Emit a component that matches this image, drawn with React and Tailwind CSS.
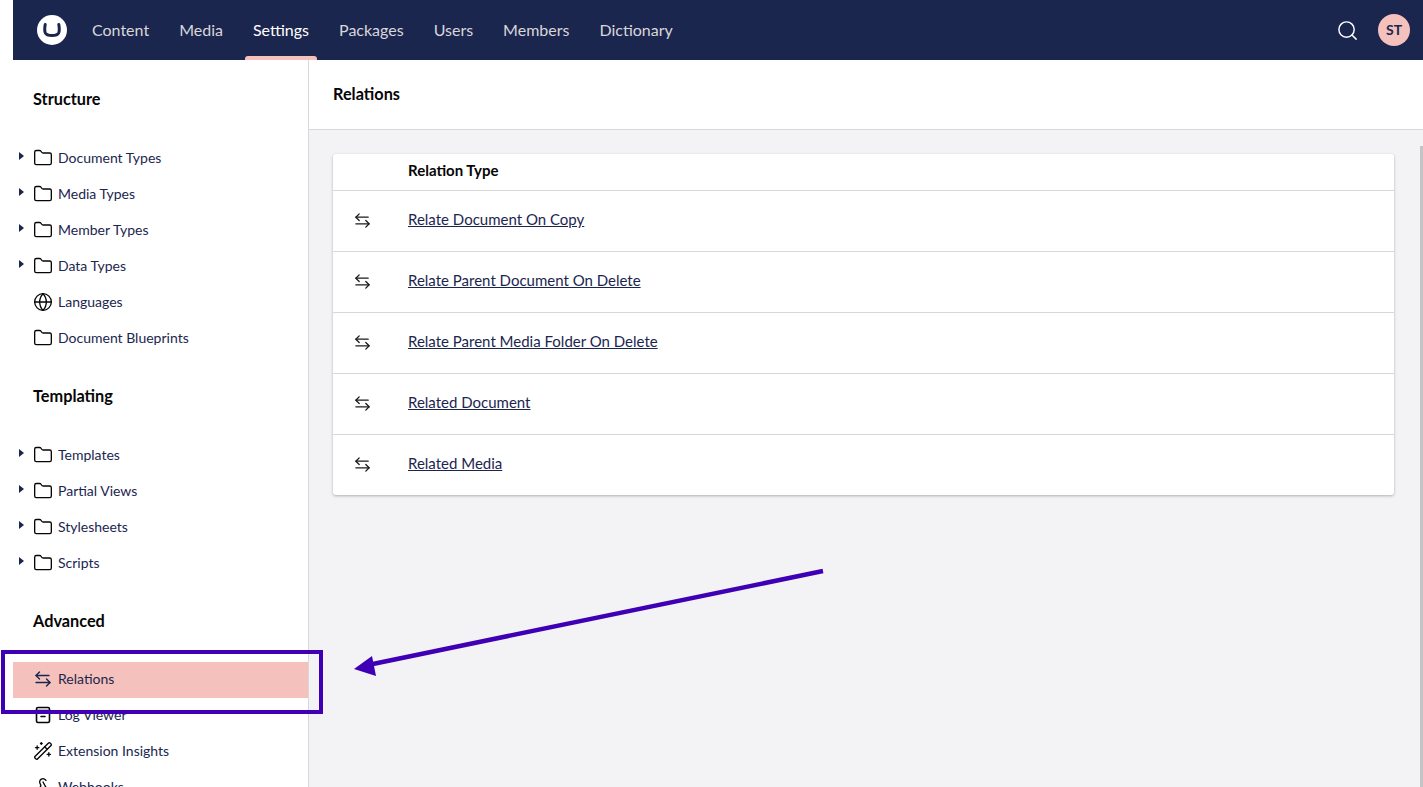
import { Folder, Globe, Search, WandSparkles, Webhook } from "lucide-react";

const navItems = ["Content", "Media", "Settings", "Packages", "Users", "Members", "Dictionary"];

const relationTypes = [
  "Relate Document On Copy",
  "Relate Parent Document On Delete",
  "Relate Parent Media Folder On Delete",
  "Related Document",
  "Related Media",
];

const sections = [
  {
    title: "Structure",
    items: [
      { label: "Document Types", caret: true },
      { label: "Media Types", caret: true },
      { label: "Member Types", caret: true },
      { label: "Data Types", caret: true },
      { label: "Languages", icon: "globe" },
      { label: "Document Blueprints" },
    ],
  },
  {
    title: "Templating",
    items: [
      { label: "Templates", caret: true },
      { label: "Partial Views", caret: true },
      { label: "Stylesheets", caret: true },
      { label: "Scripts", caret: true },
    ],
  },
  {
    title: "Advanced",
    raised: true,
    items: [
      { label: "Relations", icon: "relations", active: true },
      { label: "Log Viewer", icon: "log" },
      { label: "Extension Insights", icon: "wand" },
      { label: "Webhooks", icon: "webhook" },
    ],
  },
];

function RelationIcon({ className }) {
  return (
    <svg viewBox="0 0 18 18" fill="none" stroke="currentColor" strokeWidth="1.4" strokeLinecap="round" strokeLinejoin="round" className={className}>
      <path d="M2 5.5h13" />
      <path d="M5.5 2 2 5.5 5.5 9" />
      <path d="M2 12.5h14" />
      <path d="M12.5 9l3.5 3.5-3.500 3.5" />
    </svg>
  );
}

function LogIcon({ className }) {
  return (
    <svg viewBox="0 0 18 18" fill="none" stroke="currentColor" strokeWidth="1.6" strokeLinecap="round" strokeLinejoin="round" className={className}>
      <rect x="2.500" y="1.500" width="13" height="15" rx="1.500" />
      <path d="M2.500 4.500h13" />
      <path d="M7 10.500h4" />
    </svg>
  );
}

function RowIcon({ icon }) {
  const cls = "w-5 h-5 shrink-0 text-[#060606]";
  if (icon === "globe") return <Globe className={cls} strokeWidth={1.6} />;
  if (icon === "relations") return <RelationIcon className="w-[18px] h-[18px] mx-px shrink-0 text-[#1b264f]" />;
  if (icon === "log") return <LogIcon className="w-[18px] h-[18px] mx-px shrink-0 text-[#060606]" />;
  if (icon === "wand") return <WandSparkles className={cls} strokeWidth={1.6} />;
  if (icon === "webhook") return <Webhook className={cls} strokeWidth={1.6} />;
  return <Folder className={cls} strokeWidth={1.6} />;
}

function SidebarRow({ item, raised }) {
  return (
    <div className={`relative flex items-center h-9 pl-5 gap-[5px] text-sm text-[#1b264f] ${item.active ? "bg-[#f5c1bc]" : ""} ${raised ? "pb-[2px]" : ""}`}>
      {item.caret && (
        <span className="absolute left-[6px] top-[12px] w-0 h-0 border-y-[4px] border-y-transparent border-l-[5px] border-l-[#1b264f]" />
      )}
      <RowIcon icon={item.icon} />
      <span>{item.label}</span>
    </div>
  );
}

export default function App() {
  return (
    <div className="relative h-[787px] overflow-hidden bg-white pl-[13px] font-['Lato','Open_Sans',sans-serif]">
      <header className="h-[60px] bg-[#1b264f] flex items-center pl-6 pr-[13px]">
        <div className="w-[30px] h-[30px] rounded-full bg-white flex items-center justify-center mr-[10px]">
          <svg viewBox="0 0 30 30" className="w-[30px] h-[30px]" fill="none" stroke="#1b264f" strokeWidth="3" strokeLinecap="round">
            <path d="M8.200 9.500c-.6 3.400-.6 6.600.1 8.300.9 2 3.400 2.700 6.700 2.700s5.800-.7 6.700-2.700c.7-1.700.7-4.900.1-8.300" />
          </svg>
        </div>
        <nav className="flex h-full">
          {navItems.map((item) => (
            <div
              key={item}
              className={`relative flex items-center px-[15px] text-base ${item === "Settings" ? "text-white" : "text-[#d8d7d9]"}`}
            >
              {item}
              {item === "Settings" && (
                <span className="absolute left-[7px] right-[7px] bottom-0 h-1 rounded-t-[3px] bg-[#f5c1bc]" />
              )}
            </div>
          ))}
        </nav>
        <Search className="ml-auto w-[23px] h-[23px] text-white" strokeWidth={1.5} />
        <div className="ml-[19px] w-8 h-8 rounded-full bg-[#f5c1bc] flex items-center justify-center text-sm font-bold text-[#1b264f]">
          ST
        </div>
      </header>

      <div className="flex h-[727px]">
        <aside className="w-[296px] shrink-0 border-r border-[#d8d7d9] pt-6">
          {sections.map((section) => (
            <section key={section.title} className="mb-[25px]">
              <h3 className="h-[30px] pl-5 mb-[26px] flex items-center text-[16.3px] font-bold text-[#060606]">
                {section.title}
              </h3>
              {section.items.map((item) => (
                <SidebarRow key={item.label} item={item} raised={section.raised} />
              ))}
            </section>
          ))}
        </aside>

        <main className="relative flex-1 bg-[#f3f3f5]">
          <div className="h-[70px] bg-white border-b border-[#d8d7d9] flex items-center pl-6 text-[16.3px] font-bold text-[#060606]">
            Relations
          </div>
          <div className="pl-6 pr-[29px] pt-6">
            <div className="bg-white rounded-[3px] shadow-[0_1px_3px_rgba(0,0,0,0.28)]">
              <div className="h-[37px] border-b border-[#d8d7d9] flex items-center pl-[75px] pb-[4px] text-[15px] font-bold text-[#060606]">
                Relation Type
              </div>
              {relationTypes.map((name, i) => (
                <div
                  key={name}
                  className={`flex items-center pb-[4px] ${i < relationTypes.length - 1 ? "h-[61px] border-b border-[#d8d7d9]" : "h-[60px]"}`}
                >
                  <div className="w-[75px] pl-[21px]">
                    <RelationIcon className="w-[17px] h-[17px] translate-y-[1px] text-[#1b1b1f]" />
                  </div>
                  <a className="text-[15px] text-[#1b264f] underline">{name}</a>
                </div>
              ))}
            </div>
          </div>
          <div className="absolute right-0 top-[86px] bottom-0 w-[3px] bg-[#c4c4c4]" />
        </main>
      </div>

      {/* annotation drawn on top of the screenshot */}
      <div className="absolute left-[1px] top-[650px] w-[322px] h-[64px] border-4 border-[#3f00b5]" />
      <svg className="absolute left-[340px] top-[560px] w-[500px] h-[130px]" viewBox="0 0 500 130">
        <path d="M483 11 L28 105" stroke="#3f00b5" strokeWidth="4.500" fill="none" />
        <path d="M14 109 L32 96 L36 116 Z" fill="#3f00b5" />
      </svg>
    </div>
  );
}
